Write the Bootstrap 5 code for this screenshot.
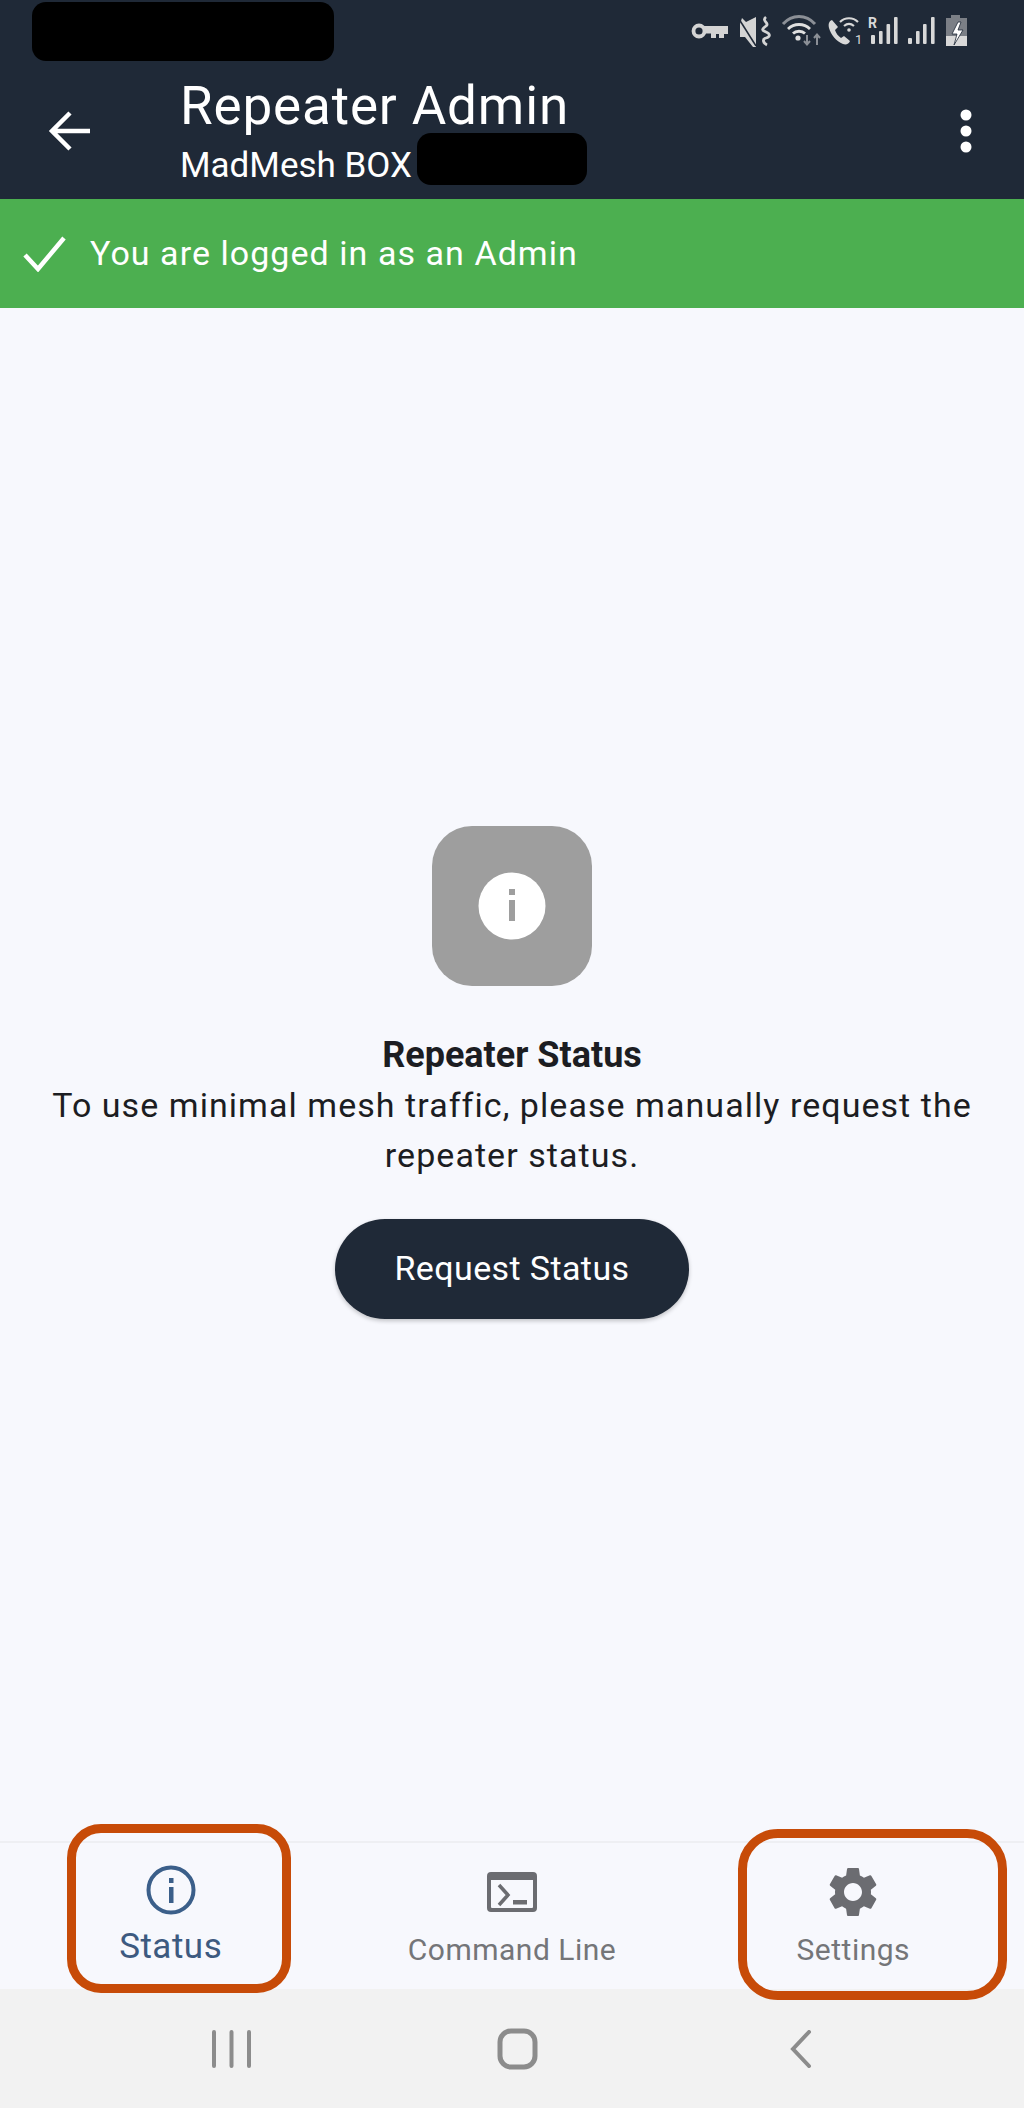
<!DOCTYPE html>
<html lang="en">
<head>
  <meta charset="UTF-8">
  <meta name="viewport" content="width=device-width, initial-scale=1.0">
  <title>Repeater Admin</title>
  <link rel="stylesheet" href="https://cdn.jsdelivr.net/npm/bootstrap@5.3.0/dist/css/bootstrap.min.css">
  <style>
    html, body {
      margin: 0;
      height: 2108px;
    }
    body {
      font-family: Roboto, "Liberation Sans", sans-serif;
      background-color: #f7f8fd;
      color: #1c1d22;
    }
    .phone {
      position: relative;
      width: 1024px;
      height: 2108px;
      overflow: hidden;
    }
    .app-head {
      height: 199px;
      background-color: #1f2937;
      color: #fff;
    }
    .status-strip {
      height: 62px;
      padding-left: 32px;
      padding-right: 24px;
    }
    .redact-a {
      width: 302px;
      height: 59px;
      margin-top: 2px;
      background: #000;
      border-radius: 14px;
    }
    .redact-b {
      display: inline-block;
      width: 170px;
      height: 52px;
      margin-left: 5px;
      margin-top: -14px;
      background: #000;
      border-radius: 14px;
    }
    .title-row {
      height: 137px;
    }
    .back-slot {
      width: 180px;
      padding-left: 48px;
    }
    .head-title {
      font-size: 53px;
      line-height: 58px;
      letter-spacing: .85px;
      margin-top: 7px;
    }
    .head-sub {
      font-size: 35px;
      line-height: 52px;
      margin-top: 5px;
    }
    .more-slot {
      padding-right: 52px;
    }
    .login-bar {
      height: 109px;
      background-color: #4caf50;
      color: #fff;
      font-size: 34px;
      letter-spacing: 1.05px;
      padding-left: 23px;
      gap: 24px;
    }
    .status-pane {
      padding-bottom: 5px;
    }
    .info-tile {
      width: 160px;
      height: 160px;
      background-color: #9e9e9e;
      border-radius: 40px;
      margin-bottom: 44px;
    }
    .pane-title {
      font-size: 36px;
      line-height: 50px;
      font-weight: 700;
      margin: 0;
    }
    .pane-text {
      font-size: 34px;
      line-height: 50px;
      letter-spacing: 1.05px;
      margin: 0 0 39px;
      width: 980px;
    }
    .req-btn {
      width: 354px;
      height: 100px;
      border: 0;
      background-color: #1f2937;
      color: #fff;
      font-size: 34px;
      letter-spacing: .4px;
      border-radius: 50px;
      box-shadow: 0 2px 4px rgba(0, 0, 0, .22);
    }
    .tab-bar {
      height: 148px;
      border-top: 2px solid #eeeff3;
    }
    .tab-item {
      padding-top: 24px;
      color: #747578;
      font-size: 30px;
      line-height: 36px;
      letter-spacing: .5px;
    }
    .tab-item svg {
      display: block;
      margin-bottom: 15px;
    }
    .tab-on {
      color: #3d5a80;
      font-size: 35px;
      line-height: 36px;
      padding-top: 22px;
    }
    .tab-on svg {
      margin-bottom: 14px;
    }
    .sys-bar {
      height: 119px;
      background-color: #f2f2f2;
      padding-left: 210px;
      gap: 242px;
    }
    .callout {
      position: absolute;
      border: 9px solid #c74b08;
      pointer-events: none;
    }
    .callout-status {
      left: 67px;
      top: 1824px;
      width: 224px;
      height: 169px;
      border-radius: 34px;
    }
    .callout-settings {
      left: 738px;
      top: 1829px;
      width: 269px;
      height: 171px;
      border-radius: 40px;
    }
    .tiny-mark {
      font-family: Roboto, "Liberation Sans", sans-serif;
      fill: #d8d8d8;
    }
  </style>
</head>
<body>
<div class="phone d-flex flex-column">

  <header class="app-head">
    <div class="status-strip d-flex justify-content-between">
      <div class="redact-a"></div>
      <svg width="340" height="60" viewBox="0 0 340 60" fill="none" aria-hidden="true">
        <!-- key -->
        <circle cx="39" cy="31" r="5.500" stroke="#d4d4d4" stroke-width="3.800"/>
        <path d="M44 26h24v8h-4v4h-5v-4h-3v4h-5v-4.500h-7z" fill="#d4d4d4"/>
        <!-- mute + vibrate -->
        <path d="M80 24l2-6 4 4 10-5v30h-3l-8-10h-5z" fill="#d4d4d4"/>
        <path d="M79 19l17 27" stroke="#1f2937" stroke-width="1.500"/>
        <path d="M106 17c-5 4 4 6 0 9s-5 4 0 6 4 5 0 6-3 5 1 7" stroke="#d4d4d4" stroke-width="2.800"/>
        <!-- wifi -->
        <path d="M123 24c9-10 23-10 32 0" stroke="#8b8f96" stroke-width="3"/>
        <path d="M128 29c6-6 16-6 22 0" stroke="#e0e0e0" stroke-width="2.800"/>
        <path d="M133 33.500c3-3 9-3 12 0" stroke="#e0e0e0" stroke-width="2.800"/>
        <circle cx="138" cy="38" r="2.600" fill="#e0e0e0"/>
        <path d="M147 35v9M144 41l3 3.500 3-3.500M157 45v-10M154 38l3-3.500 3 3.500" stroke="#8b8f96" stroke-width="2"/>
        <!-- wifi call -->
        <path d="M172 20c-3 1-4 4-3 8 2 7 7 13 14 16 3 1 6 0 7-3l-6-5-3 2c-3-2-5-5-6-8l3-3z" fill="#d8d8d8"/>
        <path d="M180 22c5-5 13-5 18 0M184 26c3-2.500 7-2.500 10 0" stroke="#d8d8d8" stroke-width="2.200"/>
        <circle cx="189" cy="30" r="1.800" fill="#d8d8d8"/>
        <text x="195" y="44" font-size="13" class="tiny-mark">1</text>
        <!-- signal R -->
        <text x="208" y="28" font-size="14" font-weight="700" class="tiny-mark">R</text>
        <rect x="211" y="35" width="4" height="9" rx="1" fill="#d8d8d8"/>
        <rect x="219" y="31" width="3.600" height="13" rx="1" fill="#d8d8d8"/>
        <rect x="226.500" y="24" width="3.600" height="20" rx="1" fill="#d8d8d8"/>
        <rect x="234" y="17" width="3.600" height="27" rx="1" fill="#d8d8d8"/>
        <!-- signal -->
        <rect x="248" y="38" width="4" height="6" rx="1" fill="#d8d8d8"/>
        <rect x="256" y="31" width="3.600" height="13" rx="1" fill="#d8d8d8"/>
        <rect x="263" y="24" width="3.600" height="20" rx="1" fill="#d8d8d8"/>
        <rect x="271" y="17" width="3.600" height="27" rx="1" fill="#d8d8d8"/>
        <!-- battery -->
        <path d="M291 15h9v3h7v28h-21v-28h5z" fill="#7b7f86"/>
        <path d="M286 36h21v10h-21z" fill="#d8d8d8"/>
        <path d="M298 22l-6 12h5l-3 11 9-15h-5l3-8z" fill="#fff" stroke="#1f2937" stroke-width=".8"/>
      </svg>
    </div>
    <div class="title-row d-flex align-items-center">
      <div class="back-slot">
        <svg width="44" height="44" viewBox="0 0 44 44" fill="none" aria-hidden="true">
          <path d="M42 22H5M22 4L4 22l18 18" stroke="#fff" stroke-width="4.500"/>
        </svg>
      </div>
      <div class="flex-grow-1">
        <div class="head-title">Repeater Admin</div>
        <div class="head-sub d-flex align-items-center">MadMesh BOX<span class="redact-b"></span></div>
      </div>
      <div class="more-slot">
        <svg width="12" height="44" viewBox="0 0 12 44" fill="#fff" aria-hidden="true">
          <circle cx="6" cy="6" r="5.500"/><circle cx="6" cy="22" r="5.500"/><circle cx="6" cy="38" r="5.500"/>
        </svg>
      </div>
    </div>
  </header>

  <div class="login-bar d-flex align-items-center">
    <svg width="43" height="36" viewBox="0 0 43 36" fill="none" aria-hidden="true">
      <path d="M2 19l13 14L41 2" stroke="#fff" stroke-width="4.500"/>
    </svg>
    <span>You are logged in as an Admin</span>
  </div>

  <main class="status-pane flex-grow-1 d-flex flex-column align-items-center justify-content-center text-center">
    <div class="info-tile d-flex align-items-center justify-content-center">
      <svg width="68" height="68" viewBox="0 0 68 68" aria-hidden="true">
        <circle cx="34" cy="34" r="33.500" fill="#fff"/>
        <rect x="31" y="17" width="6" height="6" fill="#9e9e9e"/>
        <rect x="31" y="28" width="6" height="21" fill="#9e9e9e"/>
      </svg>
    </div>
    <p class="pane-title">Repeater Status</p>
    <p class="pane-text">To use minimal mesh traffic, please manually request the repeater status.</p>
    <button type="button" class="btn req-btn">Request Status</button>
  </main>

  <nav class="tab-bar row g-0 text-center">
    <div class="col-4 tab-item tab-on d-flex flex-column align-items-center">
      <svg width="50" height="50" viewBox="0 0 50 50" fill="none" aria-hidden="true">
        <circle cx="25" cy="25" r="22.500" stroke="#3b5f8a" stroke-width="4"/>
        <rect x="23" y="13" width="4.500" height="5" fill="#3b5f8a"/>
        <rect x="23" y="22" width="4.500" height="16" fill="#3b5f8a"/>
      </svg>
      <span>Status</span>
    </div>
    <div class="col-4 tab-item d-flex flex-column align-items-center">
      <svg width="50" height="50" viewBox="0 0 50 50" aria-hidden="true">
        <path fill-rule="evenodd" fill="#6b6c71" d="M4 5h42a4 4 0 0 1 4 4v32a4 4 0 0 1-4 4H4a4 4 0 0 1-4-4V9a4 4 0 0 1 4-4zM4 13v27a1 1 0 0 0 1 1h40a1 1 0 0 0 1-1V13z"/>
        <path d="M12 18l9 10-9 10" fill="none" stroke="#6b6c71" stroke-width="3.500"/>
        <rect x="26" y="33" width="14" height="4.500" fill="#6b6c71"/>
      </svg>
      <span>Command Line</span>
    </div>
    <div class="col-4 tab-item d-flex flex-column align-items-center">
      <svg width="50" height="50" viewBox="2.400 2 19.200 20" fill="#6b6c71" aria-hidden="true">
        <path d="M19.14 12.94c.04-.3.06-.61.06-.94 0-.32-.02-.64-.07-.94l2.03-1.58c.18-.14.23-.41.12-.61l-1.92-3.32c-.12-.22-.37-.29-.59-.22l-2.39.96c-.5-.38-1.03-.7-1.62-.94l-.36-2.54c-.04-.24-.24-.41-.48-.41h-3.84c-.24 0-.43.17-.47.41l-.36 2.54c-.59.24-1.13.57-1.62.94l-2.39-.96c-.22-.08-.47 0-.59.22L2.74 8.87c-.12.21-.08.47.12.61l2.03 1.58c-.05.3-.09.63-.09.94s.02.64.07.94l-2.03 1.58c-.18.14-.23.41-.12.61l1.92 3.32c.12.22.37.29.59.22l2.39-.96c.5.38 1.03.7 1.62.94l.36 2.54c.05.24.24.41.48.41h3.84c.24 0 .44-.17.47-.41l.36-2.54c.59-.24 1.13-.56 1.62-.94l2.39.96c.22.08.47 0 .59-.22l1.92-3.32c.12-.22.07-.47-.12-.61l-2.01-1.58zM12 15.6c-1.98 0-3.6-1.62-3.6-3.6s1.62-3.6 3.6-3.6 3.6 1.62 3.6 3.6-1.62 3.6-3.6 3.6z"/>
      </svg>
      <span>Settings</span>
    </div>
  </nav>

  <div class="sys-bar d-flex align-items-center">
    <svg width="43" height="38" viewBox="0 0 43 38" fill="none" stroke="#8c8c8c" stroke-width="4" stroke-linecap="round" aria-hidden="true">
      <path d="M4 2v34M21.500 2v34M39 2v34"/>
    </svg>
    <svg width="50" height="42" viewBox="0 0 50 42" fill="none" aria-hidden="true">
      <rect x="5" y="3" width="35" height="36" rx="11" stroke="#8c8c8c" stroke-width="5"/>
    </svg>
    <svg width="25" height="38" viewBox="0 0 25 38" fill="none" aria-hidden="true">
      <path d="M22 2L6 19l16 17" stroke="#8c8c8c" stroke-width="4" stroke-linecap="round"/>
    </svg>
  </div>

  <div class="callout callout-status"></div>
  <div class="callout callout-settings"></div>
</div>

<script src="https://cdn.jsdelivr.net/npm/bootstrap@5.3.0/dist/js/bootstrap.bundle.min.js"></script>
</body>
</html>
